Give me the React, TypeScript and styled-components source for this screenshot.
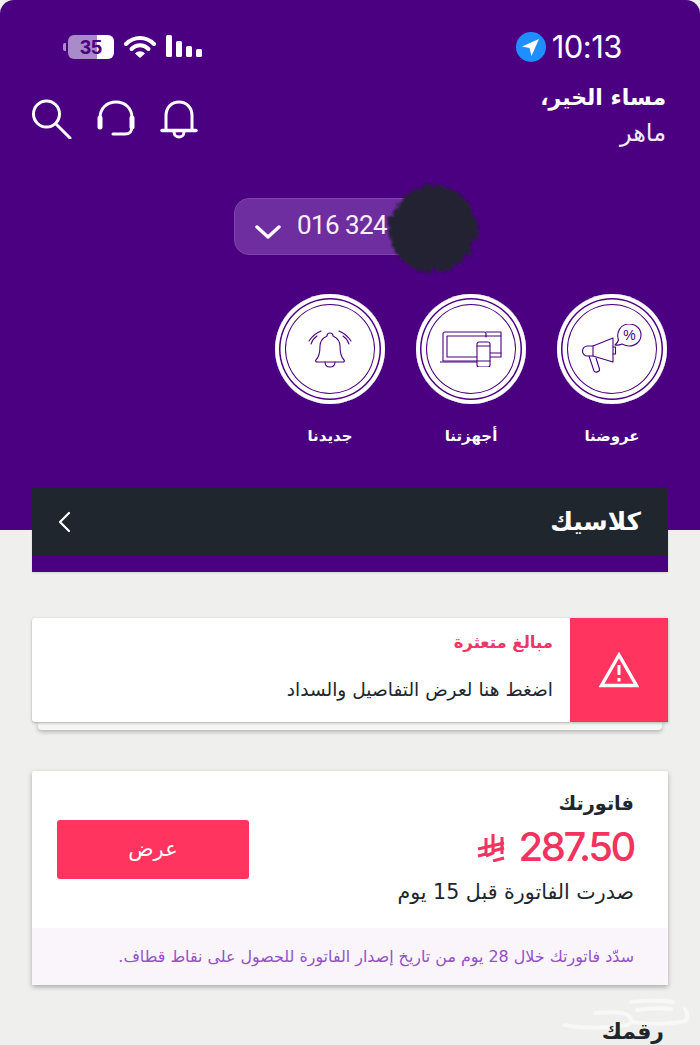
import React from "react";
import styled, { createGlobalStyle } from "styled-components";

const Global = createGlobalStyle`
  html, body { margin: 0; padding: 0; background: #efefed; }
  body { font-family: "DejaVu Sans", "Noto Sans", sans-serif; }
`;

const Page = styled.div`
  width: 700px; height: 1045px; overflow: hidden; background: #efefed; position: relative;
`;
const Header = styled.header`
  height: 530px; box-sizing: border-box; background: #4b0082; border-radius: 14px 14px 0 0;
  padding: 30px 34px 0 32px; display: flex; flex-direction: column; color: #fff;
`;
const StatusBar = styled.div`
  display: flex; justify-content: space-between; align-items: center; height: 34px; padding: 0 44px 0 32px;
`;
const StatusGroup = styled.div`
  display: flex; align-items: center; gap: ${(p: { $gap: number }) => p.$gap}px;
`;
const Battery = styled.div`
  width: 46px; height: 24px; border-radius: 6px; color: #4b0082; font: 700 20px/24px "Liberation Sans", sans-serif;
  text-align: center; background: linear-gradient(90deg, #a98bc9 0 64%, #fff 64% 100%); margin-left: 4px; position: relative;
  &::before { content: ""; position: absolute; left: -5px; top: 8px; width: 3px; height: 8px; border-radius: 2px 0 0 2px; background: #a98bc9; }
`;
const Time = styled.span`
  font: 400 31px/34px Inter, "Liberation Sans", sans-serif; letter-spacing: -0.5px;
`;
const TopRow = styled.div`
  display: flex; justify-content: space-between; align-items: flex-start; margin-top: 18px; height: 70px;
`;
const HeaderIcons = styled.div`
  display: flex; align-items: center; gap: 23px; margin-top: 17px;
`;
const Greeting = styled.div`
  text-align: right; direction: rtl;
`;
const GreetingTitle = styled.div`
  font-size: 22px; line-height: 32px; font-weight: 700;
`;
const GreetingName = styled.div`
  font-size: 24px; line-height: 38px; font-weight: 400; color: #f3ecf8;
`;
const PhoneRow = styled.div`
  display: flex; justify-content: center; margin: 46px 0 0 0; position: relative;
`;
const PhonePill = styled.div`
  width: 230px; height: 57px; box-sizing: border-box; border-radius: 15px; background: #6f2e9f; border: 1px solid #7d45a8;
  display: flex; align-items: center; gap: 16px; padding-left: 20px;
`;
const PhoneText = styled.span`
  font: 400 26px/30px Roboto, sans-serif; color: #f7effb; margin-top: -3px; letter-spacing: -0.6px;
`;
const Blob = styled.svg`
  position: absolute; left: 346px; top: -24px; width: 104px; height: 104px;
`;
const Shortcuts = styled.div`
  display: flex; justify-content: flex-end; gap: 31px; margin-top: 39px; margin-right: -1px;
`;
const Shortcut = styled.div`
  width: 110px; display: flex; flex-direction: column; align-items: center;
`;
const Ring = styled.div`
  width: 110px; height: 110px; box-sizing: border-box; border-radius: 50%; background: #fff;
  display: flex; align-items: center; justify-content: center;
  box-shadow: inset 0 0 0 4px #fff, inset 0 0 0 5.5px #4b0082, inset 0 0 0 10px #fff, inset 0 0 0 11px #4b0082;
`;
const ShortcutLabel = styled.div`
  font-size: 15px; line-height: 20px; font-weight: 700; margin-top: 22px; direction: rtl; color: #fff;
`;
const Content = styled.main`
  padding: 0 32px; margin-top: -42px; position: relative; display: flex; flex-direction: column;
`;
const PlanCard = styled.section`
  height: 84px; box-sizing: border-box; background: #20262e; border-bottom: 16px solid #4b0082;
  display: flex; justify-content: space-between; align-items: center; padding: 0 27px 0 26px;
  box-shadow: 0 1px 2px rgba(0,0,0,.12);
`;
const PlanTitle = styled.div`
  font-size: 24.800px; font-weight: 700; color: #fff; direction: rtl; line-height: 34px;
`;
const AlertStack = styled.div`
  margin-top: 46px; position: relative; height: 104px;
  &::after { content: ""; position: absolute; left: 6px; right: 6px; bottom: -8px; height: 8px; background: #f6f6f5;
    border-radius: 0 0 4px 4px; box-shadow: 0 2px 4px rgba(0,0,0,.25); }
`;
const AlertCard = styled.section`
  height: 104px; background: #fff; display: flex; flex-direction: row-reverse; box-shadow: 0 1px 3px rgba(0,0,0,.3);
  position: relative; z-index: 1; border-radius: 3px 0 0 3px;
`;
const AlertIcon = styled.div`
  width: 98px; background: #ff3560; display: flex; align-items: center; justify-content: center;
`;
const AlertBody = styled.div`
  flex: 1; direction: rtl; padding: 11px 17px 0 0;
`;
const AlertTitle = styled.div`
  color: #ee3566; font-size: 16.500px; font-weight: 700; line-height: 28px;
`;
const AlertText = styled.div`
  color: #20262e; font-size: 18.600px; font-weight: 400; line-height: 28px; margin-top: 19px;
`;
const InvoiceCard = styled.section`
  margin-top: 49px; height: 214px; background: #fff; box-shadow: 0 2px 5px rgba(0,0,0,.3); display: flex; flex-direction: column; border-radius: 2px;
`;
const InvoiceMain = styled.div`
  height: 157px; display: flex; justify-content: space-between; align-items: flex-start; padding: 0 34px 0 25px;
`;
const ViewButton = styled.button`
  width: 192px; height: 59px; margin-top: 49px; border: 0; border-radius: 3px; background: #ff3560; color: #fff;
  font: 400 21px/1 "DejaVu Sans", sans-serif; direction: rtl; padding: 0;
`;
const InvoiceInfo = styled.div`
  direction: rtl; display: flex; flex-direction: column; padding-top: 18px;
`;
const InvoiceTitle = styled.div`
  font-size: 19.300px; font-weight: 700; color: #20262e; line-height: 30px;
`;
const AmountRow = styled.div`
  display: flex; align-items: center; gap: 14px; margin-top: 6px; height: 44px;
`;
const Amount = styled.span`
  font: 500 40px/44px Inter, "Liberation Sans", sans-serif; color: #f2335f; letter-spacing: -2.400px; direction: ltr;
`;
const InvoiceDate = styled.div`
  font-size: 20.600px; font-weight: 400; color: #20262e; line-height: 30px; margin-top: 8px;
`;
const InvoiceNote = styled.div`
  flex: 1; background: #f9f5fb; direction: rtl; padding: 0 34px; display: flex; align-items: center;
  font-size: 15.900px; color: #9451c9; white-space: nowrap;
`;
const NumberTitle = styled.div`
  direction: rtl; text-align: right; font-size: 22px; font-weight: 700; color: #20262e; margin-top: 33px; padding-right: 4px; line-height: 28px; position: relative; z-index: 1;
`;
const Watermark = styled.svg`
  position: absolute; right: 9px; top: 998px; width: 130px; height: 42px;
`;

const stroke = { fill: "none", stroke: "#fff", strokeLinecap: "round" as const, strokeLinejoin: "round" as const };
const line = { fill: "none", stroke: "#4b0082", strokeLinecap: "round" as const, strokeLinejoin: "round" as const, strokeWidth: 1.1 };

const SearchIcon = () => (
  <svg width="40" height="40" viewBox="0 0 40 40"><circle cx="14.500" cy="15" r="13" {...stroke} strokeWidth="3" /><path d="M24 25l14 14" {...stroke} strokeWidth="3" /></svg>
);
const HeadsetIcon = () => (
  <svg width="42" height="40" viewBox="0 0 42 40">
    <path d="M5 24V19C5 9 12 3 21 3s16 6 16 16v5" {...stroke} strokeWidth="3" />
    <path d="M5 19v9M37 19v9" {...stroke} strokeWidth="5" />
    <path d="M37 27c0 6-2 8-7 8H18" {...stroke} strokeWidth="3" />
  </svg>
);
const BellIcon = () => (
  <svg width="38" height="40" viewBox="0 0 38 40">
    <path d="M6 31V17C6 8 12 3 19 3s13 5 13 14v14" {...stroke} strokeWidth="3" />
    <path d="M2 31.500h34" {...stroke} strokeWidth="3.400" />
    <path d="M14 33c0 3 2.500 5 5 5s5-2 5-5" {...stroke} strokeWidth="3" />
  </svg>
);
const MegaphoneIcon = () => (
  <svg width="60" height="50" viewBox="0 0 60 50">
    <path d="M31 14L11 22H5.500a5 5 0 0 0 0 10H11L31 38z" {...line} />
    <path d="M11 22v10M31 23h2.500v7H31" {...line} />
    <path d="M7 32l5 15c1 2 6 1 5.500-2L14 34" {...line} />
    <path d="M33 21c2-2 3-3 3.500-5C34 9 38 0 47 0c7 0 12 5 12 11s-5 11-12 11c-3 0-5-1-7-2-2 1-4 1.500-7 1z" {...line} />
    <text x="47.500" y="16" textAnchor="middle" fontFamily="Liberation Sans" fontWeight="400" fontSize="14" fill="#4b0082">%</text>
  </svg>
);
const DevicesIcon = () => (
  <svg width="62" height="36" viewBox="0 0 62 36">
    <path d="M3 30V3c0-1 .500-2 2-2h39c1 0 2 1 2 2v3M3 30h34" {...line} />
    <path d="M7 5h39M7 5v21h30" {...line} />
    <path d="M0 31h37" {...line} />
    <path d="M46 1h15v25H50" {...line} />
    <path d="M46 5h15M50 22h11" {...line} />
    <rect x="37" y="11" width="13" height="25" rx="2" fill="#fff" stroke="#4b0082" strokeWidth="1.100" />
    <path d="M37 15h13M37 30h13" {...line} />
  </svg>
);
const RingingBell = () => (
  <svg width="44" height="44" viewBox="0 0 44 44">
    <path d="M8 33c3-3 4-7 4-14 0-6 5-9 7-10 0-2 1-3 3-3s3 1 3 3c2 1 7 4 7 10 0 7 1 11 4 14 1 1 0 2-1 2H9c-1 0-2-1-1-2z" {...line} />
    <path d="M17 35c0 3 2 5 5 5s5-2 5-5" {...line} />
    <path d="M9 9C6 11 4 14 3 17M13 4C8 6 3 11 1 14M35 9c3 2 5 5 6 8M31 4c5 2 10 7 12 10" {...line} />
  </svg>
);
const Riyal = () => (
  <svg width="28" height="30" viewBox="0 0 28 30" aria-hidden="true">
    <path d="M16 2v19l-7 3M9 6v18M25 5v17" fill="none" stroke="#f2335f" strokeWidth="3" />
    <path d="M1 17l26-6M1 24l8-2M16 19l11-3M16 29l11-3" fill="none" stroke="#f2335f" strokeWidth="3" />
  </svg>
);

export default function App() {
  return (
    <Page>
      <Global />
      <Header>
        <StatusBar>
          <StatusGroup $gap={10}>
            <Battery>35</Battery>
            <svg width="32" height="24" viewBox="0 0 32 24">
              <path d="M2 9c8-8 20-8 28 0" fill="none" stroke="#fff" strokeWidth="4" strokeLinecap="round" />
              <path d="M7.500 14c5-5 12-5 17 0" fill="none" stroke="#fff" strokeWidth="4" strokeLinecap="round" />
              <path d="M11 18.500c3-3 7-3 10 0L16 23z" fill="#fff" />
            </svg>
            <svg width="36" height="24" viewBox="0 0 36 24" fill="#fff">
              <rect x="0" y="0" width="6" height="22" rx="1.500" />
              <rect x="10" y="6" width="6" height="16" rx="1.500" />
              <rect x="20" y="11" width="6" height="11" rx="1.500" />
              <rect x="30" y="14" width="6" height="8" rx="1.500" />
            </svg>
          </StatusGroup>
          <StatusGroup $gap={6}>
            <svg width="30" height="30" viewBox="0 0 30 30">
              <circle cx="15" cy="15" r="15" fill="#1f8fff" />
              <path d="M23 7L6 14.500l7.500 1.500 2 8z" fill="#fff" />
            </svg>
            <Time>10:13</Time>
          </StatusGroup>
        </StatusBar>
        <TopRow>
          <HeaderIcons>
            <SearchIcon />
            <HeadsetIcon />
            <BellIcon />
          </HeaderIcons>
          <Greeting>
            <GreetingTitle>مساء الخير،</GreetingTitle>
            <GreetingName>ماهر</GreetingName>
          </Greeting>
        </TopRow>
        <PhoneRow>
          <PhonePill>
            <svg width="26" height="16" viewBox="0 0 26 16" style={{ marginTop: 10 }}><path d="M2 3l11 10L24 3" fill="none" stroke="#fff" strokeWidth="3.400" strokeLinecap="round" strokeLinejoin="round" /></svg>
            <PhoneText>016 324</PhoneText>
          </PhonePill>
          <Blob viewBox="0 0 104 104" aria-hidden="true">
            <defs>
              <filter id="rough" x="-20%" y="-20%" width="140%" height="140%">
                <feTurbulence baseFrequency="0.12" numOctaves="2" seed="4" />
                <feDisplacementMap in="SourceGraphic" scale="12" />
                <feGaussianBlur stdDeviation="1" />
              </filter>
            </defs>
            <ellipse cx="52" cy="52" rx="44" ry="43" fill="#232230" filter="url(#rough)" />
          </Blob>
        </PhoneRow>
        <Shortcuts>
          <Shortcut>
            <Ring><RingingBell /></Ring>
            <ShortcutLabel>جديدنا</ShortcutLabel>
          </Shortcut>
          <Shortcut>
            <Ring><DevicesIcon /></Ring>
            <ShortcutLabel>أجهزتنا</ShortcutLabel>
          </Shortcut>
          <Shortcut>
            <Ring><MegaphoneIcon /></Ring>
            <ShortcutLabel>عروضنا</ShortcutLabel>
          </Shortcut>
        </Shortcuts>
      </Header>
      <Content>
        <PlanCard>
          <svg width="14" height="22" viewBox="0 0 14 22"><path d="M11 2L2 11l9 9" fill="none" stroke="#fff" strokeWidth="2.200" strokeLinecap="round" strokeLinejoin="round" /></svg>
          <PlanTitle>كلاسيك</PlanTitle>
        </PlanCard>
        <AlertStack>
          <AlertCard>
            <AlertIcon>
              <svg width="40" height="36" viewBox="0 0 40 36">
                <path d="M20 3L2.500 33.500h35z" fill="none" stroke="#fff" strokeWidth="3.400" />
                <path d="M20 13v10M20 26v3.500" fill="none" stroke="#fff" strokeWidth="3" />
              </svg>
            </AlertIcon>
            <AlertBody>
              <AlertTitle>مبالغ متعثرة</AlertTitle>
              <AlertText>اضغط هنا لعرض التفاصيل والسداد</AlertText>
            </AlertBody>
          </AlertCard>
        </AlertStack>
        <InvoiceCard>
          <InvoiceMain>
            <ViewButton>عرض</ViewButton>
            <InvoiceInfo>
              <InvoiceTitle>فاتورتك</InvoiceTitle>
              <AmountRow>
                <Amount>287.50</Amount>
                <Riyal />
              </AmountRow>
              <InvoiceDate>صدرت الفاتورة قبل 15 يوم</InvoiceDate>
            </InvoiceInfo>
          </InvoiceMain>
          <InvoiceNote>سدّد فاتورتك خلال 28 يوم من تاريخ إصدار الفاتورة للحصول على نقاط قطاف.</InvoiceNote>
        </InvoiceCard>
        <NumberTitle>رقمك</NumberTitle>
      </Content>
      <Watermark viewBox="0 0 130 42" aria-hidden="true">
        <path d="M4 27c20 4 45 3 62 0 4-1 6-5 2-9-6-5-22-4-34-3M72 24c14 3 38 2 52-1 3-2 3-8 0-12M70 4c14-2 30-2 42 0M76 12c12-2 24-2 34-1" fill="none" stroke="#f8f8f7" strokeWidth="4" strokeLinecap="round" />
      </Watermark>
    </Page>
  );
}
